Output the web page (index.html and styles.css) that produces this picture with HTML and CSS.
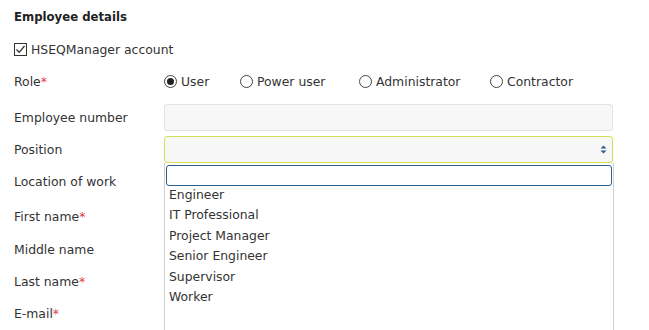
FILE: index.html
```html
<!DOCTYPE html>
<html>
<head>
<meta charset="utf-8">
<link rel="stylesheet" href="styles.css">
</head>
<body>
<div class="page">
  <h2 class="title">Employee details</h2>
  <label class="check-row"><span class="checkbox"><svg width="13" height="13" viewBox="0 0 13 13"><rect x="0.5" y="0.5" width="12" height="12" fill="#fff" stroke="#333"/><path d="M2.5 6.5 L5.2 9.3 L10.5 3" fill="none" stroke="#333" stroke-width="1.3"/></svg></span>HSEQManager account</label>
  <div class="form">
    <div class="row role-row">
      <div class="label">Role<span class="req">*</span></div>
      <div class="radios">
        <span class="radio r1"><span class="dot on"></span>User</span>
        <span class="radio r2"><span class="dot"></span>Power user</span>
        <span class="radio r3"><span class="dot"></span>Administrator</span>
        <span class="radio"><span class="dot"></span>Contractor</span>
      </div>
    </div>
    <div class="row">
      <div class="label">Employee number</div>
      <div class="input"></div>
    </div>
    <div class="row">
      <div class="label">Position</div>
      <div class="input select"><span class="arrows"><svg width="7" height="9" viewBox="0 0 7 9"><path d="M0.5 3.5 L3.5 0.5 L6.5 3.5 Z M0.5 5.5 L3.5 8.5 L6.5 5.5 Z" fill="#2a5f8f"/></svg></span>
        <div class="dropdown">
          <div class="search"></div>
          <ul class="options">
            <li>Engineer</li>
            <li>IT Professional</li>
            <li>Project Manager</li>
            <li>Senior Engineer</li>
            <li>Supervisor</li>
            <li>Worker</li>
          </ul>
        </div>
      </div>
    </div>
    <div class="row"><div class="label">Location of work</div></div>
    <div class="row first"><div class="label">First name<span class="req">*</span></div></div>
    <div class="row"><div class="label">Middle name</div></div>
    <div class="row"><div class="label">Last name<span class="req">*</span></div></div>
    <div class="row last"><div class="label">E-mail<span class="req">*</span></div></div>
  </div>
</div>
</body>
</html>
```
FILE: styles.css
```css
* { box-sizing: border-box; }
html, body { margin: 0; padding: 0; background: #fff; }
body {
  font-family: "DejaVu Sans", Verdana, sans-serif;
  font-size: 12.4px;
  color: #333;
  overflow: hidden;
  height: 330px;
}
.page { padding: 8px 0 0 14px; }
.title {
  margin: 0;
  font-family: "DejaVu Sans Condensed", "DejaVu Sans", sans-serif;
  font-size: 13px;
  font-weight: bold;
  line-height: 18px;
  color: #222;
}
.check-row {
  display: flex;
  align-items: center;
  margin-top: 14px;
  height: 18px;
  gap: 4px;
}
.checkbox { display: flex; width: 13px; height: 13px; }
.form { margin-top: 6px; }
.row {
  display: flex;
  align-items: center;
  height: 32px;
}
.role-row { height: 34px; margin-bottom: 3px; }
.first { margin-top: 3px; height: 33px; }
.last { height: 32px; }
.label { width: 150px; flex: none; }
.req { color: #e23a4a; }
.radios { display: flex; align-items: center; }
.radio { display: flex; align-items: center; gap: 4px; }
.r1 { width: 76px; }
.r2 { width: 119px; }
.r3 { width: 131px; }
.dot {
  width: 13px; height: 13px;
  border: 1px solid #444;
  border-radius: 50%;
  background: #fff;
  display: inline-block;
  position: relative;
  flex: none;
}
.dot.on::after {
  content: "";
  position: absolute;
  left: 2px; top: 2px;
  width: 7px; height: 7px;
  border-radius: 50%;
  background: #222;
}
.input {
  width: 449px;
  height: 27px;
  background: #f7f7f7;
  border: 1px solid #e3e3e3;
  border-radius: 3px;
  position: relative;
}
.select {
  border-color: #d3e04f;
  display: flex;
  align-items: center;
  justify-content: flex-end;
  padding-right: 5px;
}
.arrows { display: flex; }
.dropdown {
  position: absolute;
  left: -1px;
  top: 26px;
  width: 450px;
  height: 168px;
  background: #fff;
  border-left: 1px solid #d0d0d0;
  border-right: 1px solid #d0d0d0;
  padding: 2px 1px 0 1px;
  z-index: 5;
}
.search {
  height: 21px;
  border: 1px solid #2a5f8f;
  border-radius: 3px;
  background: #fff;
}
.options {
  list-style: none;
  margin: -1px 0 0 0;
  padding: 0 0 0 3px;
}
.options li {
  height: 20.6px;
  line-height: 20.6px;
  color: #333;
}
```
